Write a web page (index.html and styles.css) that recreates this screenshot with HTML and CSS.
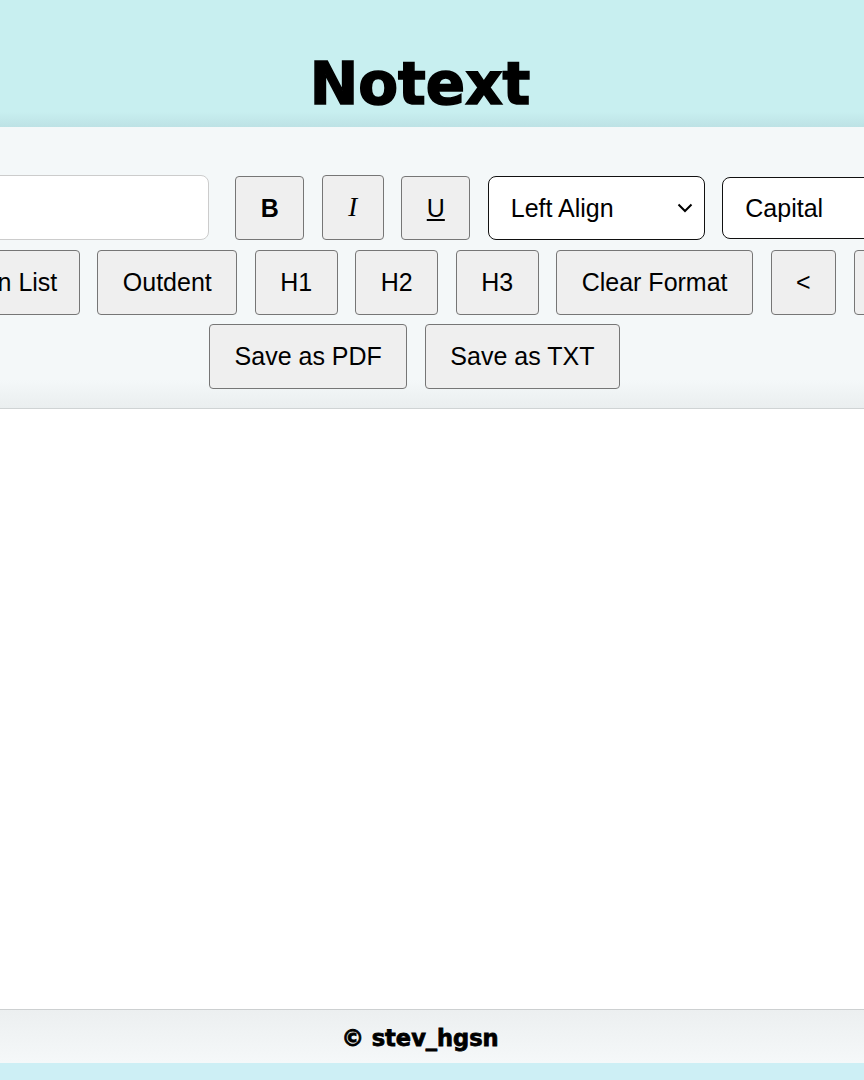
FILE: index.html
```html
<!DOCTYPE html>
<html lang="en">
<head>
<meta charset="utf-8">
<title>Notext</title>
<link rel="stylesheet" href="styles.css">
</head>
<body>
<header class="site-header">
  <h1 class="brand">Notext</h1>
</header>
<section class="toolbar">
  <div class="tool-row row-first">
    <input class="file-name" type="text" aria-label="File name">
    <button class="tool-btn btn-bold" type="button">B</button>
    <button class="tool-btn btn-italic" type="button">I</button>
    <button class="tool-btn btn-underline" type="button">U</button>
    <select class="tool-select select-align" aria-label="Alignment">
      <option>Left Align</option>
      <option>Center Align</option>
      <option>Right Align</option>
      <option>Justify</option>
    </select>
    <select class="tool-select select-case" aria-label="Text case">
      <option>Capital</option>
      <option>Uppercase</option>
      <option>Lowercase</option>
    </select>
  </div>
  <div class="tool-row">
    <button class="tool-btn btn-list" type="button">Hidden List</button>
    <button class="tool-btn" type="button">Outdent</button>
    <button class="tool-btn" type="button">H1</button>
    <button class="tool-btn" type="button">H2</button>
    <button class="tool-btn" type="button">H3</button>
    <button class="tool-btn" type="button">Clear Format</button>
    <button class="tool-btn" type="button">&lt;</button>
    <button class="tool-btn" type="button">&gt;</button>
  </div>
  <div class="tool-row">
    <button class="tool-btn" type="button">Save as PDF</button>
    <button class="tool-btn" type="button">Save as TXT</button>
  </div>
</section>
<main class="editor" contenteditable="true"></main>
<footer class="site-footer">
  <p class="credit">© stev_hgsn</p>
</footer>
</body>
</html>
```
FILE: styles.css
```css
* {
  box-sizing: border-box;
}

html,
body {
  margin: 0;
}

body {
  background: #cdeff5;
  font-family: "Liberation Sans", Arial, sans-serif;
  overflow-x: hidden;
}

.site-header {
  height: 127px;
  padding: 50px 24px 0 0;
  text-align: center;
  background: linear-gradient(to bottom, #c8eff0 0%, #c8eff0 88%, #bde2e5 100%);
}

.brand {
  margin: 0;
  font-family: "DejaVu Sans", sans-serif;
  font-weight: 700;
  font-size: 58px;
  line-height: 69px;
  letter-spacing: 0;
  color: #000;
  -webkit-text-stroke: 1.6px #000;
}

.toolbar {
  display: flex;
  flex-direction: column;
  gap: 9px;
  padding: 47px 0 19px;
  overflow: hidden;
  background: linear-gradient(to bottom, #f4f8f9 0%, #f4f8f9 90%, #eaeeef 100%);
  border-bottom: 1px solid #cfd3d4;
}

.tool-row {
  display: flex;
  justify-content: center;
  align-items: center;
  gap: 17.5px;
  padding-right: 35px;
}

.row-first {
  min-height: 67px;
}

.tool-row > * {
  flex-shrink: 0;
}

.tool-btn {
  font-family: "Liberation Sans", Arial, sans-serif;
  font-size: 25px;
  line-height: 29px;
  padding: 17px 24.5px;
  color: #000;
  background: #efefef;
  border: 1px solid #767676;
  border-radius: 4px;
}

.btn-list {
  padding-left: 21.5px;
  padding-right: 21.5px;
}

.btn-bold {
  font-weight: 700;
  height: 64px;
}

.btn-italic {
  font-family: "Liberation Serif", "Times New Roman", serif;
  font-style: italic;
  font-size: 27px;
  padding-left: 25.5px;
  padding-right: 25.5px;
}

.btn-underline {
  text-decoration: underline;
  height: 64px;
}

.file-name {
  width: 302px;
  height: 65px;
  margin-right: 9px;
  background: #fff;
  border: 1px solid #cccccc;
  border-radius: 8px;
  font-size: 25px;
}

.tool-select {
  appearance: none;
  -webkit-appearance: none;
  height: 64px;
  padding: 0 40px 0 22px;
  font-family: "Liberation Sans", Arial, sans-serif;
  font-size: 25px;
  color: #000;
  background-color: #fff;
  background-image: url("data:image/svg+xml,%3Csvg xmlns='http://www.w3.org/2000/svg' width='16' height='10' viewBox='0 0 16 10'%3E%3Cpath d='M1.5 1.5 8 8l6.5-6.5' fill='none' stroke='%23000' stroke-width='2'/%3E%3C/svg%3E");
  background-repeat: no-repeat;
  background-position: right 11px center;
  background-size: 16px 10px;
  border: 1px solid #111;
  border-radius: 8px;
}

.select-align {
  width: 217px;
}

.select-case {
  width: 200px;
  height: 62px;
}

.editor {
  display: block;
  height: 600px;
  padding: 16px;
  background: #fff;
  outline: none;
}

.site-footer {
  height: 54px;
  display: flex;
  align-items: center;
  justify-content: center;
  padding: 3px 24px 0 0;
  border-top: 1px solid #cdd0d1;
  background: linear-gradient(to bottom, #eceff0, #f5f8f9);
}

.credit {
  margin: 0;
  font-family: "DejaVu Sans", sans-serif;
  font-weight: 700;
  font-size: 22.5px;
  letter-spacing: 0;
  color: #000;
  -webkit-text-stroke: 0.8px #000;
}
```
